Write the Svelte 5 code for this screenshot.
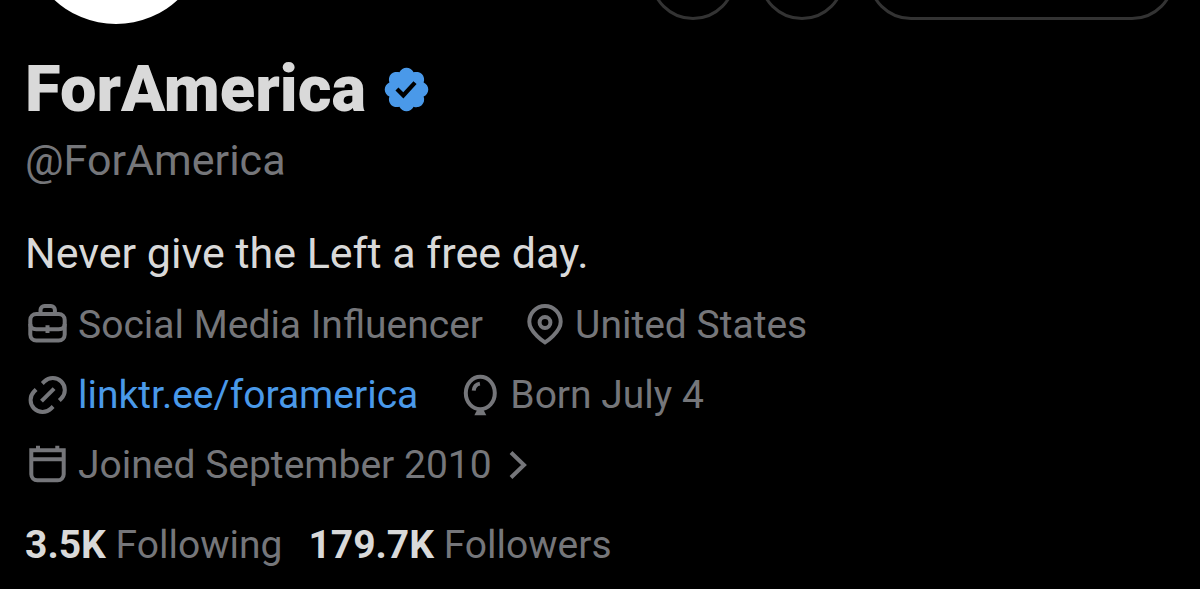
<script lang="ts">
	const profile = {
		name: 'ForAmerica',
		handle: '@ForAmerica',
		bio: 'Never give the Left a free day.'
	};

	const details = [
		[
			{ icon: 'work', text: 'Social Media Influencer' },
			{ icon: 'place', text: 'United States' }
		],
		[
			{ icon: 'link', text: 'linktr.ee/foramerica', href: 'https://linktr.ee/foramerica' },
			{ icon: 'balloon', text: 'Born July 4' }
		],
		[{ icon: 'calendar', text: 'Joined September 2010', more: true }]
	];

	const stats = [
		{ count: '3.5K', label: 'Following', href: '#following' },
		{ count: '179.7K', label: 'Followers', href: '#followers' }
	];
</script>

<main>
	<header>
		<div class="avatar"></div>
		<div class="actions">
			<button class="round" aria-label="More"></button>
			<button class="round" aria-label="Notify"></button>
			<button class="pill" aria-label="Follow status"></button>
		</div>
	</header>

	<div class="title">
		<h1>{profile.name}</h1>
		<svg class="badge" viewBox="0 0 22 22" role="img" aria-label="Verified account">
			<path
				d="M20.396 11c-.018-.646-.215-1.275-.57-1.816-.354-.54-.852-.972-1.438-1.246.223-.607.27-1.264.14-1.897-.131-.634-.437-1.218-.882-1.687-.47-.445-1.053-.75-1.687-.882-.633-.13-1.29-.083-1.897.14-.273-.587-.704-1.086-1.245-1.44S11.647 1.62 11 1.604c-.646.017-1.273.213-1.813.568s-.969.854-1.24 1.44c-.608-.223-1.267-.272-1.902-.14-.635.13-1.22.436-1.69.882-.445.47-.749 1.055-.878 1.688-.13.633-.08 1.29.144 1.896-.587.274-1.087.705-1.443 1.245-.356.54-.555 1.17-.574 1.817.02.647.218 1.276.574 1.817.356.54.856.972 1.443 1.245-.224.606-.274 1.263-.144 1.896.13.634.433 1.218.877 1.688.47.443 1.054.747 1.687.878.633.132 1.29.084 1.897-.136.274.586.705 1.084 1.246 1.439.54.354 1.17.551 1.816.569.647-.016 1.276-.213 1.817-.567s.972-.854 1.245-1.44c.604.239 1.266.296 1.903.164.636-.132 1.22-.447 1.68-.907.46-.46.776-1.044.908-1.681s.075-1.299-.165-1.903c.586-.274 1.084-.705 1.439-1.246.354-.54.551-1.17.569-1.816zM9.662 14.85l-3.429-3.428 1.293-1.302 2.072 2.072 4.4-4.794 1.347 1.246z"
			/>
		</svg>
	</div>
	<p class="handle">{profile.handle}</p>
	<p class="bio">{profile.bio}</p>

	<div class="details">
		{#each details as row}
			<div class="row">
				{#each row as item}
					<div class="item">
						<svg class="icon" viewBox="-1 0 44 44" aria-hidden="true">
							{#if item.icon === 'work'}
								<rect x="4.3" y="11" width="34.4" height="26.5" rx="6" />
								<path d="M14.5 11V7a4 4 0 0 1 4-4h6.4a4 4 0 0 1 4 4v4" />
								<path d="M4.3 21c0 3.5 2 5.3 6 5.3h22.4c4 0 6-1.8 6-5.3M21.5 22.3v7.7" />
							{:else if item.icon === 'place'}
								<path
									d="M22 39.4S6.3 29.4 6.3 18.7a15.7 15.7 0 0 1 31.4 0C37.7 29.4 22 39.4 22 39.4z"
								/>
								<circle cx="22" cy="19.5" r="5.4" />
							{:else if item.icon === 'link'}
								<path d="M16.3 10.5l2-2a12 12 0 0 1 17 17l-2 2" />
								<path d="M27.1 33.5l-2 2a12 12 0 0 1-17-17l2-2" />
								<path d="M15.5 28.2l12.6-12.6" />
							{:else if item.icon === 'balloon'}
								<ellipse cx="22.3" cy="20" rx="14.5" ry="16.3" />
								<path d="M15.7 17.6c.3-3.8 2.6-6.4 6.2-7" />
								<path class="solid" d="M19.3 36.5h6l3 5.8H16.4z" />
							{:else}
								<path d="M5.3 7.3h32.4v24a6 6 0 0 1-6 6H11.3a6 6 0 0 1-6-6z" />
								<path d="M5.3 16.3h32.4M12 2.7v5M31.3 2.7v5" />
							{/if}
						</svg>
						{#if item.href}
							<a href={item.href}>{item.text}</a>
						{:else}
							<span>{item.text}</span>
						{/if}
						{#if item.more}
							<svg class="chevron" viewBox="0 0 20 32" aria-hidden="true">
								<path d="M2 3.5L15 16 2 28.5" />
							</svg>
						{/if}
					</div>
				{/each}
			</div>
		{/each}
	</div>

	<div class="stats">
		{#each stats as stat}
			<a href={stat.href}><strong>{stat.count}</strong> {stat.label}</a>
		{/each}
	</div>
</main>

<style>
	:global(body) {
		margin: 0;
		background: #000;
	}
	main {
		padding: 0 25px;
		color: #d9d9d9;
		font-family: Roboto, 'Liberation Sans', sans-serif;
		font-size: 39px;
	}
	h1,
	p {
		margin: 0;
		font-weight: 400;
	}
	a {
		color: inherit;
		text-decoration: none;
	}

	/* only the lower edge of the avatar row is in view */
	header {
		display: flex;
		justify-content: space-between;
		align-items: flex-end;
		height: 24px;
		overflow: hidden;
	}
	.avatar {
		width: 182px;
		height: 182px;
		border-radius: 50%;
		background: #fff;
	}
	.actions {
		display: flex;
		gap: 23px;
		padding-bottom: 4px;
	}
	.actions button {
		box-sizing: border-box;
		height: 86px;
		padding: 0;
		border: 3px solid #333;
		border-radius: 43px;
		background: transparent;
	}
	.round {
		width: 86px;
	}
	.pill {
		width: 307px;
	}

	.title {
		display: flex;
		align-items: center;
		gap: 15px;
		height: 66px;
		margin-top: 32px;
	}
	h1 {
		font-size: 65px;
		font-weight: 900;
		line-height: 66px;
	}
	.badge {
		width: 51px;
		height: 51px;
		fill: #4a99e9;
	}
	.handle {
		margin-top: 10px;
		color: #75767a;
		font-size: 43px;
		line-height: 56px;
	}
	.bio {
		margin-top: 37px;
		font-size: 43px;
		line-height: 56px;
	}

	.details {
		margin-top: 9px;
		color: #75767a;
	}
	.row {
		display: flex;
		gap: 39px;
		height: 70px;
	}
	.item {
		display: flex;
		align-items: center;
		gap: 9px;
	}
	.item a {
		color: #4a99e9;
	}
	.icon {
		width: 44px;
		height: 44px;
	}
	.icon,
	.chevron {
		fill: none;
		stroke: #75767a;
		stroke-width: 4;
	}
	.solid {
		fill: #75767a;
		stroke: none;
	}
	.chevron {
		width: 20px;
		height: 32px;
		margin-left: 8px;
	}

	.stats {
		display: flex;
		gap: 26px;
		margin-top: 20px;
		color: #75767a;
		line-height: 50px;
	}
	strong {
		color: #d9d9d9;
		font-weight: 700;
	}
</style>
